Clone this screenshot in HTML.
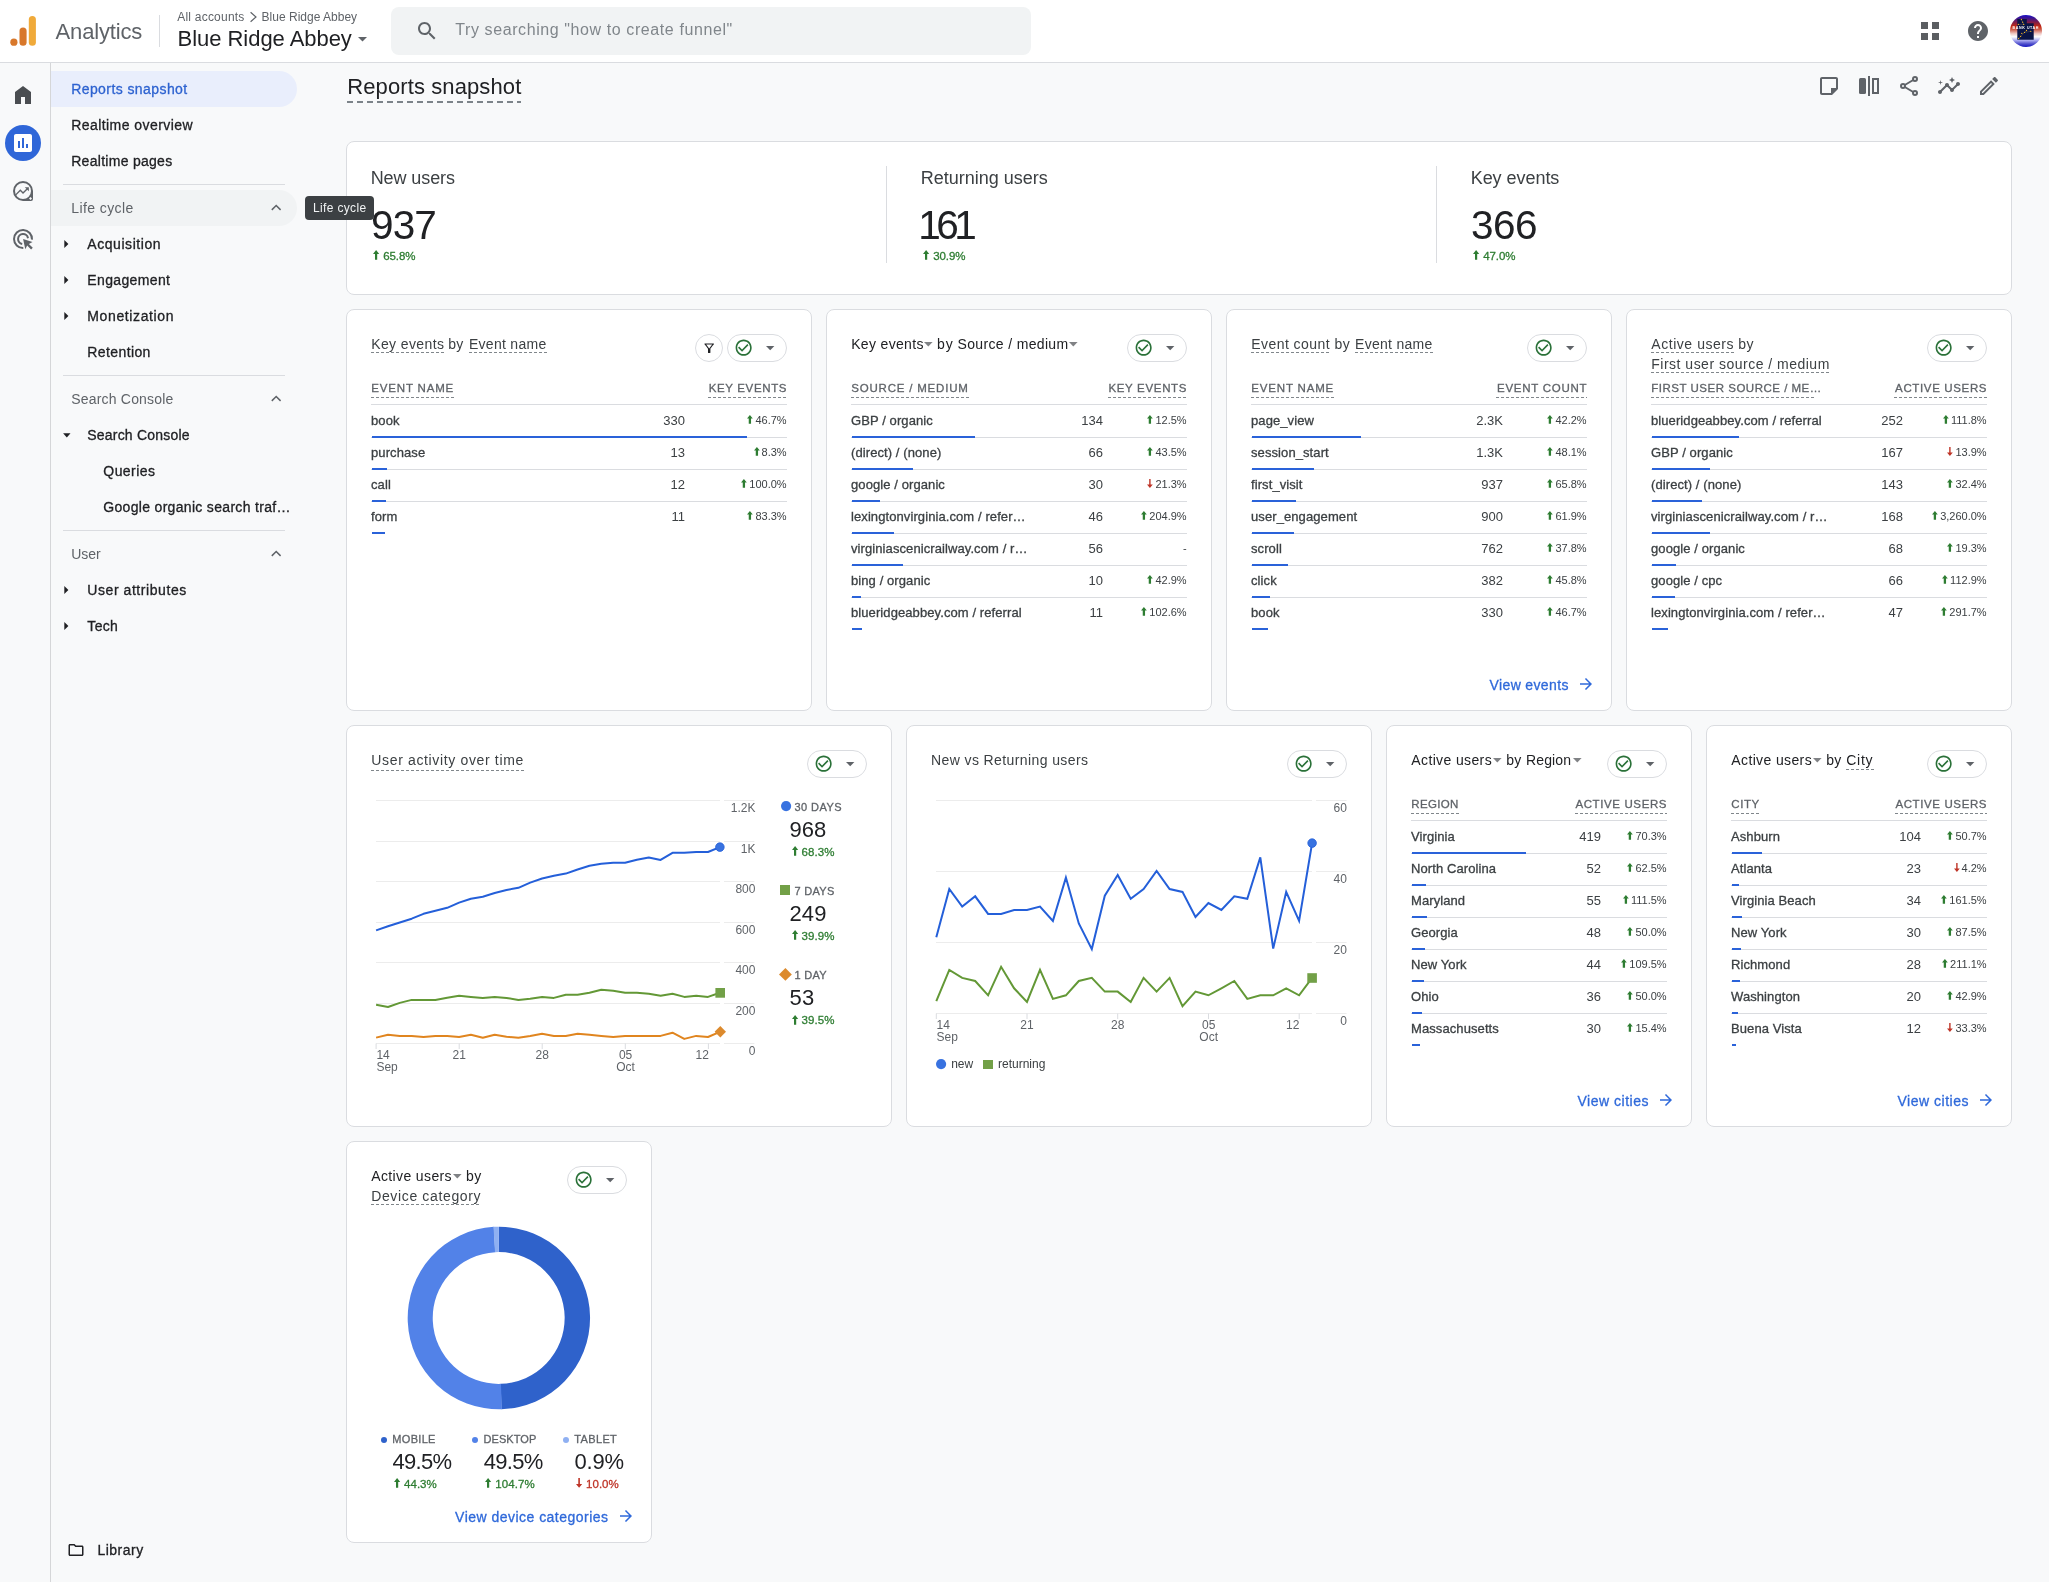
<!DOCTYPE html>
<html lang="en"><head><meta charset="utf-8"><title>Analytics | Reports snapshot</title>
<style>
*{box-sizing:border-box;margin:0;padding:0}
html,body{width:2049px;height:1582px;overflow:hidden;background:#f8f9fa;font-family:"Liberation Sans",sans-serif;position:relative}
.t{position:absolute;white-space:nowrap;line-height:1}
.dsh{position:absolute;height:1px;display:block}
.card{position:absolute;background:#fff;border:1px solid #dadce0;border-radius:8px}
.m{-webkit-text-stroke:0.3px currentColor}
.m2{-webkit-text-stroke:0.3px currentColor}
svg{position:absolute;overflow:visible}
</style></head><body><div id="app" style="position:absolute;left:0;top:0;width:2049px;height:1582px;will-change:transform">
<div style="position:absolute;left:0;top:0;width:2049px;height:63px;background:#fff;border-bottom:1px solid #dadce0"></div>
<svg style="left:0;top:0" width="50" height="62" viewBox="0 0 50 62"><rect x="28.8" y="16.1" width="7.1" height="29.6" rx="3.55" fill="#f0aa3a"/><rect x="19.5" y="27.5" width="7.1" height="18.2" rx="3.55" fill="#d8782b"/><circle cx="13.9" cy="42.15" r="3.6" fill="#d8782b"/></svg>
<span class="t " style="left:55.60px;top:21.00px;font-size:22px;color:#5f6368;letter-spacing:-0.159px;">Analytics</span>
<div style="position:absolute;left:159.0px;top:15.0px;width:1.0px;height:32.0px;background:#dadce0"></div>
<span class="t " style="left:177.20px;top:11.00px;font-size:12px;color:#5f6368;letter-spacing:0.225px;">All accounts</span>
<svg style="left:249px;top:11px" width="9" height="12" viewBox="0 0 9 12" fill="none" stroke="#5f6368" stroke-width="1.2"><path d="M1.6 1.2 L7 6 L1.6 10.8"/></svg>
<span class="t " style="left:261.60px;top:11.00px;font-size:12px;color:#5f6368;letter-spacing:0.006px;">Blue Ridge Abbey</span>
<span class="t " style="left:177.60px;top:28.00px;font-size:22px;color:#202124;letter-spacing:-0.044px;">Blue Ridge Abbey</span>
<svg style="left:357.5px;top:36.8px" width="9" height="5" viewBox="0 0 9 5" fill="#5f6368"><path d="M0 0h9L4.5 4.6z"/></svg>
<div style="position:absolute;left:391.0px;top:7.0px;width:640.0px;height:48.0px;background:#f1f3f4;border-radius:8px"></div>
<svg style="left:415.30px;top:18.70px" width="24" height="24" viewBox="0 0 24 24" fill="#5f6368" ><path d="M15.5 14h-.79l-.28-.27C15.41 12.59 16 11.11 16 9.5 16 5.91 13.09 3 9.5 3S3 5.91 3 9.5 5.91 16 9.5 16c1.61 0 3.09-.59 4.23-1.57l.27.28v.79l5 4.99L20.49 19l-4.99-5zm-6 0C7.01 14 5 11.99 5 9.5S7.01 5 9.5 5 14 7.01 14 9.5 11.99 14 9.5 14z"/></svg>
<span class="t " style="left:455.30px;top:22.00px;font-size:16px;color:#80868b;letter-spacing:0.591px;">Try searching &quot;how to create funnel&quot;</span>
<div style="position:absolute;left:1921.0px;top:22.0px;width:7.0px;height:7.0px;background:#5b5e62"></div>
<div style="position:absolute;left:1932.0px;top:22.0px;width:7.0px;height:7.0px;background:#5b5e62"></div>
<div style="position:absolute;left:1921.0px;top:33.0px;width:7.0px;height:7.0px;background:#5b5e62"></div>
<div style="position:absolute;left:1932.0px;top:33.0px;width:7.0px;height:7.0px;background:#5b5e62"></div>
<svg style="left:1966.00px;top:19.00px" width="24" height="24" viewBox="0 0 24 24" fill="#5f6368" ><path d="M12 2C6.48 2 2 6.48 2 12s4.48 10 10 10 10-4.48 10-10S17.52 2 12 2zm1 17h-2v-2h2v2zm2.07-7.75l-.9.92C13.45 12.9 13 13.5 13 15h-2v-.5c0-1.1.45-2.1 1.17-2.83l1.24-1.26c.37-.36.59-.86.59-1.41 0-1.1-.9-2-2-2s-2 .9-2 2H8c0-2.21 1.79-4 4-4s4 1.79 4 4c0 .88-.36 1.68-.93 2.25z"/></svg>
<div style="position:absolute;left:2010px;top:15px;width:32px;height:32px;border-radius:50%;overflow:hidden;background:linear-gradient(180deg,#1a10c8 0%,#3c1490 10%,#8c1e3c 25%,#c62a14 36%,#cc5a48 45%,#f0c8c4 58%,#ffffff 68%,#b4b4f4 78%,#5050cc 90%,#1414c0 100%)"><svg style="left:0;top:0" width="32" height="32" viewBox="0 0 32 32"><path d="M7.300 4h9.500v4.300h6.900v16.400H7.300z" fill="#0a1446"/><g fill="none" stroke="#9a8a60" stroke-width="0.3"><path d="M11.400 4.500L13.700 9.400H8.400M16.500 15.500L8.600 23.500M14.500 17.400L20.800 16.300"/></g><g fill="#f0b428"><circle cx="11.4" cy="4.5" r="0.650"/><circle cx="12.6" cy="7.2" r="0.650"/><circle cx="13.7" cy="9.4" r="0.650"/><circle cx="8.4" cy="9.4" r="0.650"/><circle cx="16.5" cy="15.5" r="0.650"/><circle cx="14.5" cy="17.4" r="0.650"/><circle cx="20.8" cy="16.3" r="0.650"/><circle cx="11.8" cy="18.4" r="0.650"/><circle cx="10.6" cy="21.4" r="0.650"/><circle cx="8.6" cy="23.5" r="0.650"/></g></svg><span class="t " style="left:2.60px;top:12.00px;font-size:3.6px;color:#fff;letter-spacing:0.585px;font-weight:bold;">BANK UTAH</span></div>
<div style="position:absolute;left:50.0px;top:63.0px;width:1.0px;height:1519.0px;background:#d5d6d8"></div>
<svg style="left:11.00px;top:83.00px" width="24" height="24" viewBox="0 0 24 24" fill="#4a4d51" ><path d="M4 21V9l8-6 8 6v12h-6v-7h-4v7z"/></svg>
<div style="position:absolute;left:5.0px;top:125.0px;width:36.0px;height:36.0px;background:#2f66d8;border-radius:50%"></div>
<svg style="left:11.00px;top:131.00px" width="24" height="24" viewBox="0 0 24 24" fill="#fff" ><path d="M19 3H5c-1.1 0-2 .9-2 2v14c0 1.1.9 2 2 2h14c1.1 0 2-.9 2-2V5c0-1.1-.9-2-2-2zM9 17H7v-7h2v7zm4 0h-2V7h2v10zm4 0h-2v-4h2v4z"/></svg>
<svg style="left:11.00px;top:179.00px" width="24" height="24" viewBox="0 0 24 24" fill="#5f6368" ><path fill-rule="evenodd" d="M12 2a10 10 0 1 0 0 20h8a2 2 0 0 0 2-2v-8A10 10 0 0 0 12 2zm0 2a8 8 0 1 1 0 16a8 8 0 0 1 0-16z"/><path d="M19.5 17.9l1.5 1.5-1.5 1.5-1.5-1.5z" fill="#f8f9fa"/><path transform="translate(2.9 4.1) scale(0.68)" d="M16 6l2.29 2.29-4.88 4.88-4-4L2 16.59 3.41 18l6-6 4 4 6.3-6.29L22 12V6z"/></svg>
<svg style="left:11.00px;top:227.00px" width="24" height="24" viewBox="0 0 24 24" fill="#5f6368" ><g fill="none" stroke="#5f6368" stroke-width="2"><path d="M21 12.6A9 9 0 1 0 12.3 21"/><path d="M17 11.2A5 5 0 1 0 11.2 17"/></g><path d="M12.1 12l9.4 3-3.6 1.9 3.9 3.9-1.7 1.7-3.9-3.9-1.9 3.6z"/></svg>
<div style="position:absolute;left:51.0px;top:71.0px;width:246.0px;height:36.0px;background:#e9eefc;border-radius:0 18px 18px 0"></div>
<div style="position:absolute;left:51.0px;top:190.0px;width:246.0px;height:36.0px;background:#f1f3f4;border-radius:0 18px 18px 0"></div>
<div style="position:absolute;left:63.0px;top:184.0px;width:222.0px;height:1.0px;background:#dadce0"></div>
<div style="position:absolute;left:63.0px;top:375.0px;width:222.0px;height:1.0px;background:#dadce0"></div>
<div style="position:absolute;left:63.0px;top:530.0px;width:222.0px;height:1.0px;background:#dadce0"></div>
<span class="t m" style="left:71.20px;top:82.00px;font-size:14px;color:#2d62d0;letter-spacing:0.417px;">Reports snapshot</span>
<span class="t m" style="left:71.20px;top:118.00px;font-size:14px;color:#202124;letter-spacing:0.437px;">Realtime overview</span>
<span class="t m" style="left:71.20px;top:154.00px;font-size:14px;color:#202124;letter-spacing:0.287px;">Realtime pages</span>
<span class="t " style="left:71.20px;top:201.00px;font-size:14px;color:#5f6368;letter-spacing:0.414px;">Life cycle</span>
<span class="t m" style="left:87.30px;top:237.00px;font-size:14px;color:#202124;letter-spacing:0.554px;">Acquisition</span>
<span class="t m" style="left:87.30px;top:273.00px;font-size:14px;color:#202124;letter-spacing:0.360px;">Engagement</span>
<span class="t m" style="left:87.30px;top:309.00px;font-size:14px;color:#202124;letter-spacing:0.618px;">Monetization</span>
<span class="t m" style="left:87.30px;top:345.00px;font-size:14px;color:#202124;letter-spacing:0.396px;">Retention</span>
<span class="t " style="left:71.20px;top:392.00px;font-size:14px;color:#5f6368;letter-spacing:0.199px;">Search Console</span>
<span class="t m" style="left:87.30px;top:428.00px;font-size:14px;color:#202124;letter-spacing:0.199px;">Search Console</span>
<span class="t m" style="left:103.30px;top:464.00px;font-size:14px;color:#202124;letter-spacing:0.440px;">Queries</span>
<span class="t m" style="left:103.30px;top:500.00px;font-size:14px;color:#202124;letter-spacing:0.315px;">Google organic search traf&hellip;</span>
<span class="t " style="left:71.20px;top:547.00px;font-size:14px;color:#5f6368;letter-spacing:0.010px;">User</span>
<span class="t m" style="left:87.30px;top:583.00px;font-size:14px;color:#202124;letter-spacing:0.564px;">User attributes</span>
<span class="t m" style="left:87.30px;top:619.00px;font-size:14px;color:#202124;letter-spacing:0.332px;">Tech</span>
<span class="t m" style="left:97.40px;top:1543.00px;font-size:14px;color:#202124;letter-spacing:0.515px;">Library</span>
<svg style="left:64px;top:240.0px" width="5" height="8" viewBox="0 0 5 8" fill="#202124"><path d="M0.3 0.1L4.4 4 0.3 7.9z"/></svg>
<svg style="left:64px;top:276.0px" width="5" height="8" viewBox="0 0 5 8" fill="#202124"><path d="M0.3 0.1L4.4 4 0.3 7.9z"/></svg>
<svg style="left:64px;top:312.0px" width="5" height="8" viewBox="0 0 5 8" fill="#202124"><path d="M0.3 0.1L4.4 4 0.3 7.9z"/></svg>
<svg style="left:64px;top:586.0px" width="5" height="8" viewBox="0 0 5 8" fill="#202124"><path d="M0.3 0.1L4.4 4 0.3 7.9z"/></svg>
<svg style="left:64px;top:622.0px" width="5" height="8" viewBox="0 0 5 8" fill="#202124"><path d="M0.3 0.1L4.4 4 0.3 7.9z"/></svg>
<svg style="left:62.5px;top:433px" width="8" height="5" viewBox="0 0 8 5" fill="#202124"><path d="M0.1 0.3h7.4L3.8 4.4z"/></svg>
<svg style="left:270.9px;top:204.4px" width="10.400" height="6.800" viewBox="0 0 10.4 6.8" fill="none" stroke="#5f6368" stroke-width="1.5"><path d="M0.800 5.900L5.200 1.500l4.400 4.400"/></svg>
<svg style="left:270.9px;top:395.4px" width="10.400" height="6.800" viewBox="0 0 10.4 6.8" fill="none" stroke="#5f6368" stroke-width="1.5"><path d="M0.800 5.900L5.200 1.500l4.400 4.400"/></svg>
<svg style="left:270.9px;top:550.4px" width="10.400" height="6.800" viewBox="0 0 10.4 6.8" fill="none" stroke="#5f6368" stroke-width="1.5"><path d="M0.800 5.900L5.200 1.500l4.400 4.400"/></svg>
<svg style="left:67.00px;top:1541.00px" width="18" height="18" viewBox="0 0 24 24" fill="#202124" ><path d="M9.17 6l2 2H20v10H4V6h5.17M10 4H4c-1.1 0-1.99.9-1.99 2L2 18c0 1.1.9 2 2 2h16c1.1 0 2-.9 2-2V8c0-1.1-.9-2-2-2h-8l-2-2z"/></svg>
<span class="t " style="left:347.20px;top:76.00px;font-size:22px;color:#202124;letter-spacing:0.110px;">Reports snapshot</span>
<i class="dsh" style="left:347px;top:101px;width:174px;height:2px;background-image:repeating-linear-gradient(90deg,#7c8389 0 6px,transparent 6px 10px)"></i>
<svg style="left:1817.00px;top:74.00px" width="24" height="24" viewBox="0 0 24 24" fill="#5f6368" ><path d="M19 5v9h-5v5H5V5h14m0-2H5c-1.1 0-2 .9-2 2v14c0 1.1.9 2 2 2h10l6-6V5c0-1.1-.9-2-2-2z"/></svg>
<svg style="left:1857.00px;top:74.00px" width="24" height="24" viewBox="0 0 24 24" fill="#5f6368" ><rect x="2" y="4" width="7" height="16" rx="1.5"/><rect x="11" y="2" width="2" height="20"/><path fill-rule="evenodd" d="M15 4h7v16h-7zM17 6v12h3V6z"/></svg>
<svg style="left:1897.00px;top:74.00px" width="24" height="24" viewBox="0 0 24 24" fill="#5f6368" ><g fill="none" stroke="#5f6368" stroke-width="2"><circle cx="18" cy="5" r="2"/><circle cx="6" cy="12" r="2"/><circle cx="18" cy="19" r="2"/><path d="M7.8 11L16.2 6M7.8 13l8.4 5"/></g></svg>
<svg style="left:1937.00px;top:74.00px" width="24" height="24" viewBox="0 0 24 24" fill="#5f6368" ><path d="M21 8c-1.45 0-2.26 1.44-1.93 2.51l-3.55 3.56c-.3-.09-.74-.09-1.04 0l-2.55-2.55C12.27 10.45 11.46 9 10 9c-1.45 0-2.27 1.44-1.93 2.52l-4.56 4.55C2.44 15.74 1 16.55 1 18c0 1.1.9 2 2 2 1.45 0 2.26-1.44 1.93-2.51l4.55-4.56c.3.09.74.09 1.04 0l2.55 2.55C12.73 16.55 13.54 18 15 18c1.45 0 2.27-1.44 1.93-2.52l3.56-3.55c1.07.33 2.51-.48 2.51-1.93 0-1.1-.9-2-2-2z"/><path d="M15 9l.94-2.07L18 6l-2.06-.93L15 3l-.92 2.07L12 6l2.08.93z"/><path d="M3.500 11L4 9l2-.5L4 8l-.5-2L3 8l-2 .5L3 9z"/></svg>
<svg style="left:1977.00px;top:74.00px" width="24" height="24" viewBox="0 0 24 24" fill="#5f6368" ><path d="M14.060 9.020l.920.920L5.920 19H5v-.920l9.060-9.060M17.660 3c-.250 0-.510.100-.700.290l-1.830 1.830 3.750 3.750 1.830-1.830c.390-.390.390-1.020 0-1.410l-2.340-2.340c-.200-.200-.450-.290-.710-.290zm-3.600 3.190L3 17.250V21h3.750L17.810 9.940l-3.750-3.750z"/></svg>
<div class="card" style="left:346px;top:141px;width:1666px;height:154px"></div>
<div style="position:absolute;left:886.0px;top:166.0px;width:1.0px;height:97.0px;background:#dadce0"></div>
<div style="position:absolute;left:1436.0px;top:166.0px;width:1.0px;height:97.0px;background:#dadce0"></div>
<span class="t " style="left:370.70px;top:169.00px;font-size:18px;color:#3c4043;letter-spacing:-0.092px;">New users</span>
<span class="t " style="left:371.00px;top:205.00px;font-size:40.5px;color:#202124;letter-spacing:-0.892px;">937</span>
<svg style="left:372.90px;top:250.20px" width="6.2" height="9.8" viewBox="0 0 6.2 9.8" fill="#2e7d32"><path d="M3.10 0.00L6.20 4.02L4.20 4.02L4.20 9.80L2.00 9.80L2.00 4.02L0.00 4.02z"/></svg>
<span class="t m2" style="left:383.20px;top:251.00px;font-size:11.5px;color:#2e7d32;letter-spacing:-0.062px;">65.8%</span>
<span class="t " style="left:920.70px;top:169.00px;font-size:18px;color:#3c4043;letter-spacing:0.002px;">Returning users</span>
<span class="t " style="left:918.20px;top:205.00px;font-size:40.5px;color:#202124;letter-spacing:-4.525px;">161</span>
<svg style="left:922.90px;top:250.20px" width="6.2" height="9.8" viewBox="0 0 6.2 9.8" fill="#2e7d32"><path d="M3.10 0.00L6.20 4.02L4.20 4.02L4.20 9.80L2.00 9.80L2.00 4.02L0.00 4.02z"/></svg>
<span class="t m2" style="left:933.20px;top:251.00px;font-size:11.5px;color:#2e7d32;letter-spacing:-0.062px;">30.9%</span>
<span class="t " style="left:1470.70px;top:169.00px;font-size:18px;color:#3c4043;letter-spacing:-0.045px;">Key events</span>
<span class="t " style="left:1470.90px;top:205.00px;font-size:40.5px;color:#202124;letter-spacing:-0.458px;">366</span>
<svg style="left:1472.90px;top:250.20px" width="6.2" height="9.8" viewBox="0 0 6.2 9.8" fill="#2e7d32"><path d="M3.10 0.00L6.20 4.02L4.20 4.02L4.20 9.80L2.00 9.80L2.00 4.02L0.00 4.02z"/></svg>
<span class="t m2" style="left:1483.20px;top:251.00px;font-size:11.5px;color:#2e7d32;letter-spacing:-0.062px;">47.0%</span>
<div style="position:absolute;left:305.0px;top:196.0px;width:69.0px;height:24.0px;background:#3c4043;border-radius:4px"></div>
<span class="t " style="left:313.00px;top:202.00px;font-size:12px;color:#f1f3f4;letter-spacing:0.348px;">Life cycle</span>
<div class="card" style="left:346px;top:309px;width:466px;height:402px"></div>
<span class="t " style="left:371.20px;top:337.00px;font-size:14px;color:#3c4043;letter-spacing:0.394px;">Key events</span>
<i class="dsh" style="left:371.0px;top:352.0px;width:73.5px;background-image:repeating-linear-gradient(90deg,#80868b 0 3px,transparent 3px 5px)"></i>
<span class="t " style="left:448.30px;top:337.00px;font-size:14px;color:#3c4043;letter-spacing:0.107px;">by</span>
<span class="t " style="left:468.90px;top:337.00px;font-size:14px;color:#3c4043;letter-spacing:0.289px;">Event name</span>
<i class="dsh" style="left:468.7px;top:352.0px;width:77.9px;background-image:repeating-linear-gradient(90deg,#80868b 0 3px,transparent 3px 5px)"></i>
<div style="position:absolute;left:727.0px;top:334.0px;width:60.0px;height:28.0px;border:1px solid #dadce0;border-radius:14px;background:#fff"></div>
<svg style="left:734.30px;top:338.15px" width="19.3" height="19.3" viewBox="0 0 24 24" fill="#2a7138" ><path d="M16.59 7.58L10 14.17l-3.590-3.580L5 12l5 5 8-8zM12 2C6.480 2 2 6.480 2 12s4.480 10 10 10 10-4.480 10-10S17.520 2 12 2zm0 18c-4.420 0-8-3.580-8-8s3.580-8 8-8 8 3.580 8 8-3.580 8-8 8z"/></svg>
<svg style="left:765.7px;top:346.1px" width="8.4" height="4.2" viewBox="0 0 8.4 4.2" fill="#5f6368"><path d="M0 0h8.400L4.200 4.200z"/></svg>
<div style="position:absolute;left:695.0px;top:334.0px;width:28.0px;height:28.0px;border:1px solid #dadce0;border-radius:14px;background:#fff"></div>
<svg style="left:701.60px;top:340.50px" width="14.4" height="14.4" viewBox="0 0 24 24" fill="#202124" ><path d="M7 6h10l-5.010 6.300L7 6zm-2.750-.390C6.270 8.200 10 13 10 13v6c0 .550.450 1 1 1h2c.550 0 1-.450 1-1v-6s3.720-4.800 5.740-7.390c.510-.660.040-1.610-.790-1.610H5.040c-.830 0-1.300.950-.790 1.610z"/></svg>
<span class="t m" style="left:371.30px;top:383.00px;font-size:11.5px;color:#5f6368;letter-spacing:0.824px;">EVENT NAME</span>
<i class="dsh" style="left:371.0px;top:397.0px;width:83.3px;background-image:repeating-linear-gradient(90deg,#80868b 0 3px,transparent 3px 5px)"></i>
<span class="t m" style="right:1261.85px;top:383.00px;font-size:11.5px;color:#5f6368;letter-spacing:0.649px;">KEY EVENTS</span>
<i class="dsh" style="left:708.0px;top:397.0px;width:79.0px;background-image:repeating-linear-gradient(90deg,#80868b 0 3px,transparent 3px 5px)"></i>
<div style="position:absolute;left:371.0px;top:404.0px;width:416.0px;height:1.0px;background:#dadce0"></div>
<span class="t m" style="left:371.00px;top:414.00px;font-size:13px;color:#3c4043;letter-spacing:0.09px;">book</span>
<span class="t " style="right:1364.00px;top:414.00px;font-size:13px;color:#3c4043;">330</span>
<span class="t " style="right:1262.40px;top:415.00px;font-size:11px;color:#3c4043;">46.7%</span>
<svg style="left:747.41px;top:415.20px" width="5.8" height="8.8" viewBox="0 0 5.8 8.8" fill="#2e7d32"><path d="M2.90 0.00L5.80 3.61L4.05 3.61L4.05 8.80L1.75 8.80L1.75 3.61L0.00 3.61z"/></svg>
<div style="position:absolute;left:371.0px;top:437.0px;width:416.0px;height:1.0px;background:#dadce0"></div>
<div style="position:absolute;left:372.0px;top:436.0px;width:375.0px;height:2.0px;background:#2a62d9"></div>
<span class="t m" style="left:371.00px;top:446.00px;font-size:13px;color:#3c4043;letter-spacing:0.09px;">purchase</span>
<span class="t " style="right:1364.00px;top:446.00px;font-size:13px;color:#3c4043;">13</span>
<span class="t " style="right:1262.40px;top:447.00px;font-size:11px;color:#3c4043;">8.3%</span>
<svg style="left:753.53px;top:447.20px" width="5.8" height="8.8" viewBox="0 0 5.8 8.8" fill="#2e7d32"><path d="M2.90 0.00L5.80 3.61L4.05 3.61L4.05 8.80L1.75 8.80L1.75 3.61L0.00 3.61z"/></svg>
<div style="position:absolute;left:371.0px;top:469.0px;width:416.0px;height:1.0px;background:#dadce0"></div>
<div style="position:absolute;left:372.0px;top:468.0px;width:14.8px;height:2.0px;background:#2a62d9"></div>
<span class="t m" style="left:371.00px;top:478.00px;font-size:13px;color:#3c4043;letter-spacing:0.09px;">call</span>
<span class="t " style="right:1364.00px;top:478.00px;font-size:13px;color:#3c4043;">12</span>
<span class="t " style="right:1262.40px;top:479.00px;font-size:11px;color:#3c4043;">100.0%</span>
<svg style="left:741.29px;top:479.20px" width="5.8" height="8.8" viewBox="0 0 5.8 8.8" fill="#2e7d32"><path d="M2.90 0.00L5.80 3.61L4.05 3.61L4.05 8.80L1.75 8.80L1.75 3.61L0.00 3.61z"/></svg>
<div style="position:absolute;left:371.0px;top:501.0px;width:416.0px;height:1.0px;background:#dadce0"></div>
<div style="position:absolute;left:372.0px;top:500.0px;width:13.6px;height:2.0px;background:#2a62d9"></div>
<span class="t m" style="left:371.00px;top:510.00px;font-size:13px;color:#3c4043;letter-spacing:0.09px;">form</span>
<span class="t " style="right:1364.00px;top:510.00px;font-size:13px;color:#3c4043;">11</span>
<span class="t " style="right:1262.40px;top:511.00px;font-size:11px;color:#3c4043;">83.3%</span>
<svg style="left:747.41px;top:511.20px" width="5.8" height="8.8" viewBox="0 0 5.8 8.8" fill="#2e7d32"><path d="M2.90 0.00L5.80 3.61L4.05 3.61L4.05 8.80L1.75 8.80L1.75 3.61L0.00 3.61z"/></svg>
<div style="position:absolute;left:372.0px;top:532.0px;width:12.5px;height:2.0px;background:#2a62d9"></div>
<div class="card" style="left:826px;top:309px;width:386px;height:402px"></div>
<span class="t " style="left:851.20px;top:337.00px;font-size:14px;color:#202124;letter-spacing:0.334px;">Key events</span>
<svg style="left:923.9px;top:342.2px" width="9" height="5" viewBox="0 0 9 5" fill="#808285"><path d="M0 0h8.600L4.300 4.400z"/></svg>
<span class="t " style="left:937.10px;top:337.00px;font-size:14px;color:#202124;letter-spacing:0.807px;">by</span>
<span class="t " style="left:957.50px;top:337.00px;font-size:14px;color:#202124;letter-spacing:0.345px;">Source / medium</span>
<svg style="left:1068.8px;top:342.2px" width="9" height="5" viewBox="0 0 9 5" fill="#808285"><path d="M0 0h8.600L4.300 4.400z"/></svg>
<div style="position:absolute;left:1127.0px;top:334.0px;width:60.0px;height:28.0px;border:1px solid #dadce0;border-radius:14px;background:#fff"></div>
<svg style="left:1134.30px;top:338.15px" width="19.3" height="19.3" viewBox="0 0 24 24" fill="#2a7138" ><path d="M16.59 7.58L10 14.17l-3.590-3.580L5 12l5 5 8-8zM12 2C6.480 2 2 6.480 2 12s4.480 10 10 10 10-4.480 10-10S17.520 2 12 2zm0 18c-4.420 0-8-3.580-8-8s3.580-8 8-8 8 3.580 8 8-3.580 8-8 8z"/></svg>
<svg style="left:1165.7px;top:346.1px" width="8.4" height="4.2" viewBox="0 0 8.4 4.2" fill="#5f6368"><path d="M0 0h8.400L4.200 4.200z"/></svg>
<span class="t m" style="left:851.30px;top:383.00px;font-size:11.5px;color:#5f6368;letter-spacing:0.792px;">SOURCE / MEDIUM</span>
<i class="dsh" style="left:851.0px;top:397.0px;width:117.8px;background-image:repeating-linear-gradient(90deg,#80868b 0 3px,transparent 3px 5px)"></i>
<span class="t m" style="right:861.82px;top:383.00px;font-size:11.5px;color:#5f6368;letter-spacing:0.679px;">KEY EVENTS</span>
<i class="dsh" style="left:1107.7px;top:397.0px;width:79.3px;background-image:repeating-linear-gradient(90deg,#80868b 0 3px,transparent 3px 5px)"></i>
<div style="position:absolute;left:851.0px;top:404.0px;width:336.0px;height:1.0px;background:#dadce0"></div>
<span class="t m" style="left:851.00px;top:414.00px;font-size:13px;color:#3c4043;letter-spacing:0.09px;">GBP / organic</span>
<span class="t " style="right:946.00px;top:414.00px;font-size:13px;color:#3c4043;">134</span>
<span class="t " style="right:862.40px;top:415.00px;font-size:11px;color:#3c4043;">12.5%</span>
<svg style="left:1147.41px;top:415.20px" width="5.8" height="8.8" viewBox="0 0 5.8 8.8" fill="#2e7d32"><path d="M2.90 0.00L5.80 3.61L4.05 3.61L4.05 8.80L1.75 8.80L1.75 3.61L0.00 3.61z"/></svg>
<div style="position:absolute;left:851.0px;top:437.0px;width:336.0px;height:1.0px;background:#dadce0"></div>
<div style="position:absolute;left:852.0px;top:436.0px;width:123.0px;height:2.0px;background:#2a62d9"></div>
<span class="t m" style="left:851.00px;top:446.00px;font-size:13px;color:#3c4043;letter-spacing:0.09px;">(direct) / (none)</span>
<span class="t " style="right:946.00px;top:446.00px;font-size:13px;color:#3c4043;">66</span>
<span class="t " style="right:862.40px;top:447.00px;font-size:11px;color:#3c4043;">43.5%</span>
<svg style="left:1147.41px;top:447.20px" width="5.8" height="8.8" viewBox="0 0 5.8 8.8" fill="#2e7d32"><path d="M2.90 0.00L5.80 3.61L4.05 3.61L4.05 8.80L1.75 8.80L1.75 3.61L0.00 3.61z"/></svg>
<div style="position:absolute;left:851.0px;top:469.0px;width:336.0px;height:1.0px;background:#dadce0"></div>
<div style="position:absolute;left:852.0px;top:468.0px;width:60.6px;height:2.0px;background:#2a62d9"></div>
<span class="t m" style="left:851.00px;top:478.00px;font-size:13px;color:#3c4043;letter-spacing:0.09px;">google / organic</span>
<span class="t " style="right:946.00px;top:478.00px;font-size:13px;color:#3c4043;">30</span>
<span class="t " style="right:862.40px;top:479.00px;font-size:11px;color:#3c4043;">21.3%</span>
<svg style="left:1147.41px;top:479.10px" width="5.8" height="9.0" viewBox="0 0 5.8 9.0" fill="#bf3427"><path d="M2.90 9.00L0.00 5.40L2.20 5.40L2.20 0.00L3.60 0.00L3.60 5.40L5.80 5.40z"/></svg>
<div style="position:absolute;left:851.0px;top:501.0px;width:336.0px;height:1.0px;background:#dadce0"></div>
<div style="position:absolute;left:852.0px;top:500.0px;width:27.5px;height:2.0px;background:#2a62d9"></div>
<span class="t m" style="left:851.00px;top:510.00px;font-size:13px;color:#3c4043;letter-spacing:0.09px;">lexingtonvirginia.com / refer&hellip;</span>
<span class="t " style="right:946.00px;top:510.00px;font-size:13px;color:#3c4043;">46</span>
<span class="t " style="right:862.40px;top:511.00px;font-size:11px;color:#3c4043;">204.9%</span>
<svg style="left:1141.29px;top:511.20px" width="5.8" height="8.8" viewBox="0 0 5.8 8.8" fill="#2e7d32"><path d="M2.90 0.00L5.80 3.61L4.05 3.61L4.05 8.80L1.75 8.80L1.75 3.61L0.00 3.61z"/></svg>
<div style="position:absolute;left:851.0px;top:533.0px;width:336.0px;height:1.0px;background:#dadce0"></div>
<div style="position:absolute;left:852.0px;top:532.0px;width:42.2px;height:2.0px;background:#2a62d9"></div>
<span class="t m" style="left:851.00px;top:542.00px;font-size:13px;color:#3c4043;letter-spacing:0.09px;">virginiascenicrailway.com / r&hellip;</span>
<span class="t " style="right:946.00px;top:542.00px;font-size:13px;color:#3c4043;">56</span>
<span class="t " style="right:862.40px;top:543.00px;font-size:11px;color:#3c4043;">-</span>
<div style="position:absolute;left:851.0px;top:565.0px;width:336.0px;height:1.0px;background:#dadce0"></div>
<div style="position:absolute;left:852.0px;top:564.0px;width:51.4px;height:2.0px;background:#2a62d9"></div>
<span class="t m" style="left:851.00px;top:574.00px;font-size:13px;color:#3c4043;letter-spacing:0.09px;">bing / organic</span>
<span class="t " style="right:946.00px;top:574.00px;font-size:13px;color:#3c4043;">10</span>
<span class="t " style="right:862.40px;top:575.00px;font-size:11px;color:#3c4043;">42.9%</span>
<svg style="left:1147.41px;top:575.20px" width="5.8" height="8.8" viewBox="0 0 5.8 8.8" fill="#2e7d32"><path d="M2.90 0.00L5.80 3.61L4.05 3.61L4.05 8.80L1.75 8.80L1.75 3.61L0.00 3.61z"/></svg>
<div style="position:absolute;left:851.0px;top:597.0px;width:336.0px;height:1.0px;background:#dadce0"></div>
<div style="position:absolute;left:852.0px;top:596.0px;width:9.2px;height:2.0px;background:#2a62d9"></div>
<span class="t m" style="left:851.00px;top:606.00px;font-size:13px;color:#3c4043;letter-spacing:0.09px;">blueridgeabbey.com / referral</span>
<span class="t " style="right:946.00px;top:606.00px;font-size:13px;color:#3c4043;">11</span>
<span class="t " style="right:862.40px;top:607.00px;font-size:11px;color:#3c4043;">102.6%</span>
<svg style="left:1141.29px;top:607.20px" width="5.8" height="8.8" viewBox="0 0 5.8 8.8" fill="#2e7d32"><path d="M2.90 0.00L5.80 3.61L4.05 3.61L4.05 8.80L1.75 8.80L1.75 3.61L0.00 3.61z"/></svg>
<div style="position:absolute;left:852.0px;top:628.0px;width:10.1px;height:2.0px;background:#2a62d9"></div>
<div class="card" style="left:1226px;top:309px;width:386px;height:402px"></div>
<span class="t " style="left:1251.20px;top:337.00px;font-size:14px;color:#3c4043;letter-spacing:0.451px;">Event count</span>
<i class="dsh" style="left:1251.0px;top:352.0px;width:79.3px;background-image:repeating-linear-gradient(90deg,#80868b 0 3px,transparent 3px 5px)"></i>
<span class="t " style="left:1334.60px;top:337.00px;font-size:14px;color:#3c4043;letter-spacing:0.457px;">by</span>
<span class="t " style="left:1355.10px;top:337.00px;font-size:14px;color:#3c4043;letter-spacing:0.269px;">Event name</span>
<i class="dsh" style="left:1354.9px;top:352.0px;width:77.7px;background-image:repeating-linear-gradient(90deg,#80868b 0 3px,transparent 3px 5px)"></i>
<div style="position:absolute;left:1527.0px;top:334.0px;width:60.0px;height:28.0px;border:1px solid #dadce0;border-radius:14px;background:#fff"></div>
<svg style="left:1534.30px;top:338.15px" width="19.3" height="19.3" viewBox="0 0 24 24" fill="#2a7138" ><path d="M16.59 7.58L10 14.17l-3.590-3.580L5 12l5 5 8-8zM12 2C6.480 2 2 6.480 2 12s4.480 10 10 10 10-4.480 10-10S17.520 2 12 2zm0 18c-4.420 0-8-3.580-8-8s3.580-8 8-8 8 3.580 8 8-3.580 8-8 8z"/></svg>
<svg style="left:1565.7px;top:346.1px" width="8.4" height="4.2" viewBox="0 0 8.4 4.2" fill="#5f6368"><path d="M0 0h8.400L4.200 4.200z"/></svg>
<span class="t m" style="left:1251.30px;top:383.00px;font-size:11.5px;color:#5f6368;letter-spacing:0.824px;">EVENT NAME</span>
<i class="dsh" style="left:1251.0px;top:397.0px;width:83.3px;background-image:repeating-linear-gradient(90deg,#80868b 0 3px,transparent 3px 5px)"></i>
<span class="t m" style="right:461.77px;top:383.00px;font-size:11.5px;color:#5f6368;letter-spacing:0.726px;">EVENT COUNT</span>
<i class="dsh" style="left:1496.3px;top:397.0px;width:90.7px;background-image:repeating-linear-gradient(90deg,#80868b 0 3px,transparent 3px 5px)"></i>
<div style="position:absolute;left:1251.0px;top:404.0px;width:336.0px;height:1.0px;background:#dadce0"></div>
<span class="t m" style="left:1251.00px;top:414.00px;font-size:13px;color:#3c4043;letter-spacing:0.09px;">page_view</span>
<span class="t " style="right:546.00px;top:414.00px;font-size:13px;color:#3c4043;">2.3K</span>
<span class="t " style="right:462.40px;top:415.00px;font-size:11px;color:#3c4043;">42.2%</span>
<svg style="left:1547.41px;top:415.20px" width="5.8" height="8.8" viewBox="0 0 5.8 8.8" fill="#2e7d32"><path d="M2.90 0.00L5.80 3.61L4.05 3.61L4.05 8.80L1.75 8.80L1.75 3.61L0.00 3.61z"/></svg>
<div style="position:absolute;left:1251.0px;top:437.0px;width:336.0px;height:1.0px;background:#dadce0"></div>
<div style="position:absolute;left:1252.0px;top:436.0px;width:108.9px;height:2.0px;background:#2a62d9"></div>
<span class="t m" style="left:1251.00px;top:446.00px;font-size:13px;color:#3c4043;letter-spacing:0.09px;">session_start</span>
<span class="t " style="right:546.00px;top:446.00px;font-size:13px;color:#3c4043;">1.3K</span>
<span class="t " style="right:462.40px;top:447.00px;font-size:11px;color:#3c4043;">48.1%</span>
<svg style="left:1547.41px;top:447.20px" width="5.8" height="8.8" viewBox="0 0 5.8 8.8" fill="#2e7d32"><path d="M2.90 0.00L5.80 3.61L4.05 3.61L4.05 8.80L1.75 8.80L1.75 3.61L0.00 3.61z"/></svg>
<div style="position:absolute;left:1251.0px;top:469.0px;width:336.0px;height:1.0px;background:#dadce0"></div>
<div style="position:absolute;left:1252.0px;top:468.0px;width:61.7px;height:2.0px;background:#2a62d9"></div>
<span class="t m" style="left:1251.00px;top:478.00px;font-size:13px;color:#3c4043;letter-spacing:0.09px;">first_visit</span>
<span class="t " style="right:546.00px;top:478.00px;font-size:13px;color:#3c4043;">937</span>
<span class="t " style="right:462.40px;top:479.00px;font-size:11px;color:#3c4043;">65.8%</span>
<svg style="left:1547.41px;top:479.20px" width="5.8" height="8.8" viewBox="0 0 5.8 8.8" fill="#2e7d32"><path d="M2.90 0.00L5.80 3.61L4.05 3.61L4.05 8.80L1.75 8.80L1.75 3.61L0.00 3.61z"/></svg>
<div style="position:absolute;left:1251.0px;top:501.0px;width:336.0px;height:1.0px;background:#dadce0"></div>
<div style="position:absolute;left:1252.0px;top:500.0px;width:43.7px;height:2.0px;background:#2a62d9"></div>
<span class="t m" style="left:1251.00px;top:510.00px;font-size:13px;color:#3c4043;letter-spacing:0.09px;">user_engagement</span>
<span class="t " style="right:546.00px;top:510.00px;font-size:13px;color:#3c4043;">900</span>
<span class="t " style="right:462.40px;top:511.00px;font-size:11px;color:#3c4043;">61.9%</span>
<svg style="left:1547.41px;top:511.20px" width="5.8" height="8.8" viewBox="0 0 5.8 8.8" fill="#2e7d32"><path d="M2.90 0.00L5.80 3.61L4.05 3.61L4.05 8.80L1.75 8.80L1.75 3.61L0.00 3.61z"/></svg>
<div style="position:absolute;left:1251.0px;top:533.0px;width:336.0px;height:1.0px;background:#dadce0"></div>
<div style="position:absolute;left:1252.0px;top:532.0px;width:41.9px;height:2.0px;background:#2a62d9"></div>
<span class="t m" style="left:1251.00px;top:542.00px;font-size:13px;color:#3c4043;letter-spacing:0.09px;">scroll</span>
<span class="t " style="right:546.00px;top:542.00px;font-size:13px;color:#3c4043;">762</span>
<span class="t " style="right:462.40px;top:543.00px;font-size:11px;color:#3c4043;">37.8%</span>
<svg style="left:1547.41px;top:543.20px" width="5.8" height="8.8" viewBox="0 0 5.8 8.8" fill="#2e7d32"><path d="M2.90 0.00L5.80 3.61L4.05 3.61L4.05 8.80L1.75 8.80L1.75 3.61L0.00 3.61z"/></svg>
<div style="position:absolute;left:1251.0px;top:565.0px;width:336.0px;height:1.0px;background:#dadce0"></div>
<div style="position:absolute;left:1252.0px;top:564.0px;width:35.6px;height:2.0px;background:#2a62d9"></div>
<span class="t m" style="left:1251.00px;top:574.00px;font-size:13px;color:#3c4043;letter-spacing:0.09px;">click</span>
<span class="t " style="right:546.00px;top:574.00px;font-size:13px;color:#3c4043;">382</span>
<span class="t " style="right:462.40px;top:575.00px;font-size:11px;color:#3c4043;">45.8%</span>
<svg style="left:1547.41px;top:575.20px" width="5.8" height="8.8" viewBox="0 0 5.8 8.8" fill="#2e7d32"><path d="M2.90 0.00L5.80 3.61L4.05 3.61L4.05 8.80L1.75 8.80L1.75 3.61L0.00 3.61z"/></svg>
<div style="position:absolute;left:1251.0px;top:597.0px;width:336.0px;height:1.0px;background:#dadce0"></div>
<div style="position:absolute;left:1252.0px;top:596.0px;width:17.9px;height:2.0px;background:#2a62d9"></div>
<span class="t m" style="left:1251.00px;top:606.00px;font-size:13px;color:#3c4043;letter-spacing:0.09px;">book</span>
<span class="t " style="right:546.00px;top:606.00px;font-size:13px;color:#3c4043;">330</span>
<span class="t " style="right:462.40px;top:607.00px;font-size:11px;color:#3c4043;">46.7%</span>
<svg style="left:1547.41px;top:607.20px" width="5.8" height="8.8" viewBox="0 0 5.8 8.8" fill="#2e7d32"><path d="M2.90 0.00L5.80 3.61L4.05 3.61L4.05 8.80L1.75 8.80L1.75 3.61L0.00 3.61z"/></svg>
<div style="position:absolute;left:1252.0px;top:628.0px;width:15.6px;height:2.0px;background:#2a62d9"></div>
<svg style="left:1577.10px;top:675.10px" width="18" height="18" viewBox="0 0 24 24" fill="#2f69da" ><path d="M12 4l-1.410 1.410L16.170 11H4v2h12.170l-5.580 5.590L12 20l8-8z"/></svg>
<span class="t m" style="right:480.24px;top:678.00px;font-size:14px;color:#2f69da;letter-spacing:0.361px;">View events</span>
<div class="card" style="left:1626px;top:309px;width:386px;height:402px"></div>
<span class="t " style="left:1651.30px;top:337.00px;font-size:14px;color:#3c4043;letter-spacing:0.546px;">Active users</span>
<i class="dsh" style="left:1651.0px;top:352.0px;width:83.3px;background-image:repeating-linear-gradient(90deg,#80868b 0 3px,transparent 3px 5px)"></i>
<span class="t " style="left:1738.20px;top:337.00px;font-size:14px;color:#3c4043;letter-spacing:0.557px;">by</span>
<span class="t " style="left:1651.30px;top:357.00px;font-size:14px;color:#3c4043;letter-spacing:0.492px;">First user source / medium</span>
<i class="dsh" style="left:1651.0px;top:372.0px;width:179.0px;background-image:repeating-linear-gradient(90deg,#80868b 0 3px,transparent 3px 5px)"></i>
<div style="position:absolute;left:1927.0px;top:334.0px;width:60.0px;height:28.0px;border:1px solid #dadce0;border-radius:14px;background:#fff"></div>
<svg style="left:1934.30px;top:338.15px" width="19.3" height="19.3" viewBox="0 0 24 24" fill="#2a7138" ><path d="M16.59 7.58L10 14.17l-3.590-3.580L5 12l5 5 8-8zM12 2C6.480 2 2 6.480 2 12s4.480 10 10 10 10-4.480 10-10S17.520 2 12 2zm0 18c-4.420 0-8-3.580-8-8s3.580-8 8-8 8 3.580 8 8-3.580 8-8 8z"/></svg>
<svg style="left:1965.7px;top:346.1px" width="8.4" height="4.2" viewBox="0 0 8.4 4.2" fill="#5f6368"><path d="M0 0h8.400L4.200 4.200z"/></svg>
<span class="t m" style="left:1651.30px;top:383.00px;font-size:11.5px;color:#5f6368;letter-spacing:0.505px;">FIRST USER SOURCE / ME&hellip;</span>
<i class="dsh" style="left:1651.0px;top:397.0px;width:162.5px;background-image:repeating-linear-gradient(90deg,#80868b 0 3px,transparent 3px 5px)"></i>
<span class="t m" style="right:61.85px;top:383.00px;font-size:11.5px;color:#5f6368;letter-spacing:0.645px;">ACTIVE USERS</span>
<i class="dsh" style="left:1894.4px;top:397.0px;width:92.6px;background-image:repeating-linear-gradient(90deg,#80868b 0 3px,transparent 3px 5px)"></i>
<div style="position:absolute;left:1651.0px;top:404.0px;width:336.0px;height:1.0px;background:#dadce0"></div>
<span class="t m" style="left:1651.00px;top:414.00px;font-size:13px;color:#3c4043;letter-spacing:0.09px;">blueridgeabbey.com / referral</span>
<span class="t " style="right:146.00px;top:414.00px;font-size:13px;color:#3c4043;">252</span>
<span class="t " style="right:62.40px;top:415.00px;font-size:11px;color:#3c4043;">111.8%</span>
<svg style="left:1942.92px;top:415.20px" width="5.8" height="8.8" viewBox="0 0 5.8 8.8" fill="#2e7d32"><path d="M2.90 0.00L5.80 3.61L4.05 3.61L4.05 8.80L1.75 8.80L1.75 3.61L0.00 3.61z"/></svg>
<div style="position:absolute;left:1651.0px;top:437.0px;width:336.0px;height:1.0px;background:#dadce0"></div>
<div style="position:absolute;left:1652.0px;top:436.0px;width:87.1px;height:2.0px;background:#2a62d9"></div>
<span class="t m" style="left:1651.00px;top:446.00px;font-size:13px;color:#3c4043;letter-spacing:0.09px;">GBP / organic</span>
<span class="t " style="right:146.00px;top:446.00px;font-size:13px;color:#3c4043;">167</span>
<span class="t " style="right:62.40px;top:447.00px;font-size:11px;color:#3c4043;">13.9%</span>
<svg style="left:1947.41px;top:447.10px" width="5.8" height="9.0" viewBox="0 0 5.8 9.0" fill="#bf3427"><path d="M2.90 9.00L0.00 5.40L2.20 5.40L2.20 0.00L3.60 0.00L3.60 5.40L5.80 5.40z"/></svg>
<div style="position:absolute;left:1651.0px;top:469.0px;width:336.0px;height:1.0px;background:#dadce0"></div>
<div style="position:absolute;left:1652.0px;top:468.0px;width:57.9px;height:2.0px;background:#2a62d9"></div>
<span class="t m" style="left:1651.00px;top:478.00px;font-size:13px;color:#3c4043;letter-spacing:0.09px;">(direct) / (none)</span>
<span class="t " style="right:146.00px;top:478.00px;font-size:13px;color:#3c4043;">143</span>
<span class="t " style="right:62.40px;top:479.00px;font-size:11px;color:#3c4043;">32.4%</span>
<svg style="left:1947.41px;top:479.20px" width="5.8" height="8.8" viewBox="0 0 5.8 8.8" fill="#2e7d32"><path d="M2.90 0.00L5.80 3.61L4.05 3.61L4.05 8.80L1.75 8.80L1.75 3.61L0.00 3.61z"/></svg>
<div style="position:absolute;left:1651.0px;top:501.0px;width:336.0px;height:1.0px;background:#dadce0"></div>
<div style="position:absolute;left:1652.0px;top:500.0px;width:49.9px;height:2.0px;background:#2a62d9"></div>
<span class="t m" style="left:1651.00px;top:510.00px;font-size:13px;color:#3c4043;letter-spacing:0.09px;">virginiascenicrailway.com / r&hellip;</span>
<span class="t " style="right:146.00px;top:510.00px;font-size:13px;color:#3c4043;">168</span>
<span class="t " style="right:62.40px;top:511.00px;font-size:11px;color:#3c4043;">3,260.0%</span>
<svg style="left:1932.12px;top:511.20px" width="5.8" height="8.8" viewBox="0 0 5.8 8.8" fill="#2e7d32"><path d="M2.90 0.00L5.80 3.61L4.05 3.61L4.05 8.80L1.75 8.80L1.75 3.61L0.00 3.61z"/></svg>
<div style="position:absolute;left:1651.0px;top:533.0px;width:336.0px;height:1.0px;background:#dadce0"></div>
<div style="position:absolute;left:1652.0px;top:532.0px;width:57.9px;height:2.0px;background:#2a62d9"></div>
<span class="t m" style="left:1651.00px;top:542.00px;font-size:13px;color:#3c4043;letter-spacing:0.09px;">google / organic</span>
<span class="t " style="right:146.00px;top:542.00px;font-size:13px;color:#3c4043;">68</span>
<span class="t " style="right:62.40px;top:543.00px;font-size:11px;color:#3c4043;">19.3%</span>
<svg style="left:1947.41px;top:543.20px" width="5.8" height="8.8" viewBox="0 0 5.8 8.8" fill="#2e7d32"><path d="M2.90 0.00L5.80 3.61L4.05 3.61L4.05 8.80L1.75 8.80L1.75 3.61L0.00 3.61z"/></svg>
<div style="position:absolute;left:1651.0px;top:565.0px;width:336.0px;height:1.0px;background:#dadce0"></div>
<div style="position:absolute;left:1652.0px;top:564.0px;width:23.9px;height:2.0px;background:#2a62d9"></div>
<span class="t m" style="left:1651.00px;top:574.00px;font-size:13px;color:#3c4043;letter-spacing:0.09px;">google / cpc</span>
<span class="t " style="right:146.00px;top:574.00px;font-size:13px;color:#3c4043;">66</span>
<span class="t " style="right:62.40px;top:575.00px;font-size:11px;color:#3c4043;">112.9%</span>
<svg style="left:1942.11px;top:575.20px" width="5.8" height="8.8" viewBox="0 0 5.8 8.8" fill="#2e7d32"><path d="M2.90 0.00L5.80 3.61L4.05 3.61L4.05 8.80L1.75 8.80L1.75 3.61L0.00 3.61z"/></svg>
<div style="position:absolute;left:1651.0px;top:597.0px;width:336.0px;height:1.0px;background:#dadce0"></div>
<div style="position:absolute;left:1652.0px;top:596.0px;width:22.8px;height:2.0px;background:#2a62d9"></div>
<span class="t m" style="left:1651.00px;top:606.00px;font-size:13px;color:#3c4043;letter-spacing:0.09px;">lexingtonvirginia.com / refer&hellip;</span>
<span class="t " style="right:146.00px;top:606.00px;font-size:13px;color:#3c4043;">47</span>
<span class="t " style="right:62.40px;top:607.00px;font-size:11px;color:#3c4043;">291.7%</span>
<svg style="left:1941.29px;top:607.20px" width="5.8" height="8.8" viewBox="0 0 5.8 8.8" fill="#2e7d32"><path d="M2.90 0.00L5.80 3.61L4.05 3.61L4.05 8.80L1.75 8.80L1.75 3.61L0.00 3.61z"/></svg>
<div style="position:absolute;left:1652.0px;top:628.0px;width:15.9px;height:2.0px;background:#2a62d9"></div>
<div class="card" style="left:1386px;top:725px;width:306px;height:402px"></div>
<span class="t " style="left:1411.30px;top:753.00px;font-size:14px;color:#202124;letter-spacing:0.371px;">Active users</span>
<svg style="left:1492.7px;top:758.2px" width="9" height="5" viewBox="0 0 9 5" fill="#808285"><path d="M0 0h8.600L4.300 4.400z"/></svg>
<span class="t " style="left:1506.30px;top:753.00px;font-size:14px;color:#202124;letter-spacing:0.157px;">by</span>
<span class="t " style="left:1526.00px;top:753.00px;font-size:14px;color:#202124;letter-spacing:0.139px;">Region</span>
<svg style="left:1572.8px;top:758.2px" width="9" height="5" viewBox="0 0 9 5" fill="#808285"><path d="M0 0h8.600L4.300 4.400z"/></svg>
<div style="position:absolute;left:1607.0px;top:750.0px;width:60.0px;height:28.0px;border:1px solid #dadce0;border-radius:14px;background:#fff"></div>
<svg style="left:1614.30px;top:754.15px" width="19.3" height="19.3" viewBox="0 0 24 24" fill="#2a7138" ><path d="M16.59 7.58L10 14.17l-3.590-3.580L5 12l5 5 8-8zM12 2C6.480 2 2 6.480 2 12s4.480 10 10 10 10-4.480 10-10S17.520 2 12 2zm0 18c-4.420 0-8-3.580-8-8s3.580-8 8-8 8 3.580 8 8-3.580 8-8 8z"/></svg>
<svg style="left:1645.7px;top:762.1px" width="8.4" height="4.2" viewBox="0 0 8.4 4.2" fill="#5f6368"><path d="M0 0h8.400L4.200 4.200z"/></svg>
<span class="t m" style="left:1411.30px;top:799.00px;font-size:11.5px;color:#5f6368;letter-spacing:0.339px;">REGION</span>
<i class="dsh" style="left:1411.0px;top:813.0px;width:47.9px;background-image:repeating-linear-gradient(90deg,#80868b 0 3px,transparent 3px 5px)"></i>
<span class="t m" style="right:381.89px;top:799.00px;font-size:11.5px;color:#5f6368;letter-spacing:0.612px;">ACTIVE USERS</span>
<i class="dsh" style="left:1574.8px;top:813.0px;width:92.2px;background-image:repeating-linear-gradient(90deg,#80868b 0 3px,transparent 3px 5px)"></i>
<div style="position:absolute;left:1411.0px;top:820.0px;width:256.0px;height:1.0px;background:#dadce0"></div>
<span class="t m" style="left:1411.00px;top:830.00px;font-size:13px;color:#3c4043;letter-spacing:0.09px;">Virginia</span>
<span class="t " style="right:448.00px;top:830.00px;font-size:13px;color:#3c4043;">419</span>
<span class="t " style="right:382.40px;top:831.00px;font-size:11px;color:#3c4043;">70.3%</span>
<svg style="left:1627.41px;top:831.20px" width="5.8" height="8.8" viewBox="0 0 5.8 8.8" fill="#2e7d32"><path d="M2.90 0.00L5.80 3.61L4.05 3.61L4.05 8.80L1.75 8.80L1.75 3.61L0.00 3.61z"/></svg>
<div style="position:absolute;left:1411.0px;top:853.0px;width:256.0px;height:1.0px;background:#dadce0"></div>
<div style="position:absolute;left:1412.0px;top:852.0px;width:113.6px;height:2.0px;background:#2a62d9"></div>
<span class="t m" style="left:1411.00px;top:862.00px;font-size:13px;color:#3c4043;letter-spacing:0.09px;">North Carolina</span>
<span class="t " style="right:448.00px;top:862.00px;font-size:13px;color:#3c4043;">52</span>
<span class="t " style="right:382.40px;top:863.00px;font-size:11px;color:#3c4043;">62.5%</span>
<svg style="left:1627.41px;top:863.20px" width="5.8" height="8.8" viewBox="0 0 5.8 8.8" fill="#2e7d32"><path d="M2.90 0.00L5.80 3.61L4.05 3.61L4.05 8.80L1.75 8.80L1.75 3.61L0.00 3.61z"/></svg>
<div style="position:absolute;left:1411.0px;top:885.0px;width:256.0px;height:1.0px;background:#dadce0"></div>
<div style="position:absolute;left:1412.0px;top:884.0px;width:14.1px;height:2.0px;background:#2a62d9"></div>
<span class="t m" style="left:1411.00px;top:894.00px;font-size:13px;color:#3c4043;letter-spacing:0.09px;">Maryland</span>
<span class="t " style="right:448.00px;top:894.00px;font-size:13px;color:#3c4043;">55</span>
<span class="t " style="right:382.40px;top:895.00px;font-size:11px;color:#3c4043;">111.5%</span>
<svg style="left:1622.92px;top:895.20px" width="5.8" height="8.8" viewBox="0 0 5.8 8.8" fill="#2e7d32"><path d="M2.90 0.00L5.80 3.61L4.05 3.61L4.05 8.80L1.75 8.80L1.75 3.61L0.00 3.61z"/></svg>
<div style="position:absolute;left:1411.0px;top:917.0px;width:256.0px;height:1.0px;background:#dadce0"></div>
<div style="position:absolute;left:1412.0px;top:916.0px;width:14.9px;height:2.0px;background:#2a62d9"></div>
<span class="t m" style="left:1411.00px;top:926.00px;font-size:13px;color:#3c4043;letter-spacing:0.09px;">Georgia</span>
<span class="t " style="right:448.00px;top:926.00px;font-size:13px;color:#3c4043;">48</span>
<span class="t " style="right:382.40px;top:927.00px;font-size:11px;color:#3c4043;">50.0%</span>
<svg style="left:1627.41px;top:927.20px" width="5.8" height="8.8" viewBox="0 0 5.8 8.8" fill="#2e7d32"><path d="M2.90 0.00L5.80 3.61L4.05 3.61L4.05 8.80L1.75 8.80L1.75 3.61L0.00 3.61z"/></svg>
<div style="position:absolute;left:1411.0px;top:949.0px;width:256.0px;height:1.0px;background:#dadce0"></div>
<div style="position:absolute;left:1412.0px;top:948.0px;width:13.0px;height:2.0px;background:#2a62d9"></div>
<span class="t m" style="left:1411.00px;top:958.00px;font-size:13px;color:#3c4043;letter-spacing:0.09px;">New York</span>
<span class="t " style="right:448.00px;top:958.00px;font-size:13px;color:#3c4043;">44</span>
<span class="t " style="right:382.40px;top:959.00px;font-size:11px;color:#3c4043;">109.5%</span>
<svg style="left:1621.29px;top:959.20px" width="5.8" height="8.8" viewBox="0 0 5.8 8.8" fill="#2e7d32"><path d="M2.90 0.00L5.80 3.61L4.05 3.61L4.05 8.80L1.75 8.80L1.75 3.61L0.00 3.61z"/></svg>
<div style="position:absolute;left:1411.0px;top:981.0px;width:256.0px;height:1.0px;background:#dadce0"></div>
<div style="position:absolute;left:1412.0px;top:980.0px;width:11.9px;height:2.0px;background:#2a62d9"></div>
<span class="t m" style="left:1411.00px;top:990.00px;font-size:13px;color:#3c4043;letter-spacing:0.09px;">Ohio</span>
<span class="t " style="right:448.00px;top:990.00px;font-size:13px;color:#3c4043;">36</span>
<span class="t " style="right:382.40px;top:991.00px;font-size:11px;color:#3c4043;">50.0%</span>
<svg style="left:1627.41px;top:991.20px" width="5.8" height="8.8" viewBox="0 0 5.8 8.8" fill="#2e7d32"><path d="M2.90 0.00L5.80 3.61L4.05 3.61L4.05 8.80L1.75 8.80L1.75 3.61L0.00 3.61z"/></svg>
<div style="position:absolute;left:1411.0px;top:1013.0px;width:256.0px;height:1.0px;background:#dadce0"></div>
<div style="position:absolute;left:1412.0px;top:1012.0px;width:9.8px;height:2.0px;background:#2a62d9"></div>
<span class="t m" style="left:1411.00px;top:1022.00px;font-size:13px;color:#3c4043;letter-spacing:0.09px;">Massachusetts</span>
<span class="t " style="right:448.00px;top:1022.00px;font-size:13px;color:#3c4043;">30</span>
<span class="t " style="right:382.40px;top:1023.00px;font-size:11px;color:#3c4043;">15.4%</span>
<svg style="left:1627.41px;top:1023.20px" width="5.8" height="8.8" viewBox="0 0 5.8 8.8" fill="#2e7d32"><path d="M2.90 0.00L5.80 3.61L4.05 3.61L4.05 8.80L1.75 8.80L1.75 3.61L0.00 3.61z"/></svg>
<div style="position:absolute;left:1412.0px;top:1044.0px;width:8.1px;height:2.0px;background:#2a62d9"></div>
<svg style="left:1657.20px;top:1091.10px" width="18" height="18" viewBox="0 0 24 24" fill="#2f69da" ><path d="M12 4l-1.410 1.410L16.170 11H4v2h12.170l-5.580 5.590L12 20l8-8z"/></svg>
<span class="t m" style="right:399.99px;top:1094.00px;font-size:14px;color:#2f69da;letter-spacing:0.511px;">View cities</span>
<div class="card" style="left:1706px;top:725px;width:306px;height:402px"></div>
<span class="t " style="left:1731.30px;top:753.00px;font-size:14px;color:#202124;letter-spacing:0.371px;">Active users</span>
<svg style="left:1812.7px;top:758.2px" width="9" height="5" viewBox="0 0 9 5" fill="#808285"><path d="M0 0h8.600L4.300 4.400z"/></svg>
<span class="t " style="left:1826.30px;top:753.00px;font-size:14px;color:#202124;letter-spacing:0.157px;">by</span>
<span class="t " style="left:1846.20px;top:753.00px;font-size:14px;color:#202124;letter-spacing:0.772px;">City</span>
<i class="dsh" style="left:1846.0px;top:769.0px;width:27.6px;background-image:repeating-linear-gradient(90deg,#80868b 0 3px,transparent 3px 5px)"></i>
<div style="position:absolute;left:1927.0px;top:750.0px;width:60.0px;height:28.0px;border:1px solid #dadce0;border-radius:14px;background:#fff"></div>
<svg style="left:1934.30px;top:754.15px" width="19.3" height="19.3" viewBox="0 0 24 24" fill="#2a7138" ><path d="M16.59 7.58L10 14.17l-3.590-3.580L5 12l5 5 8-8zM12 2C6.480 2 2 6.480 2 12s4.480 10 10 10 10-4.480 10-10S17.520 2 12 2zm0 18c-4.420 0-8-3.580-8-8s3.580-8 8-8 8 3.580 8 8-3.580 8-8 8z"/></svg>
<svg style="left:1965.7px;top:762.1px" width="8.4" height="4.2" viewBox="0 0 8.4 4.2" fill="#5f6368"><path d="M0 0h8.400L4.200 4.200z"/></svg>
<span class="t m" style="left:1731.30px;top:799.00px;font-size:11.5px;color:#5f6368;letter-spacing:0.551px;">CITY</span>
<i class="dsh" style="left:1731.0px;top:813.0px;width:28.9px;background-image:repeating-linear-gradient(90deg,#80868b 0 3px,transparent 3px 5px)"></i>
<span class="t m" style="right:61.89px;top:799.00px;font-size:11.5px;color:#5f6368;letter-spacing:0.612px;">ACTIVE USERS</span>
<i class="dsh" style="left:1894.8px;top:813.0px;width:92.2px;background-image:repeating-linear-gradient(90deg,#80868b 0 3px,transparent 3px 5px)"></i>
<div style="position:absolute;left:1731.0px;top:820.0px;width:256.0px;height:1.0px;background:#dadce0"></div>
<span class="t m" style="left:1731.00px;top:830.00px;font-size:13px;color:#3c4043;letter-spacing:0.09px;">Ashburn</span>
<span class="t " style="right:128.00px;top:830.00px;font-size:13px;color:#3c4043;">104</span>
<span class="t " style="right:62.40px;top:831.00px;font-size:11px;color:#3c4043;">50.7%</span>
<svg style="left:1947.41px;top:831.20px" width="5.8" height="8.8" viewBox="0 0 5.8 8.8" fill="#2e7d32"><path d="M2.90 0.00L5.80 3.61L4.05 3.61L4.05 8.80L1.75 8.80L1.75 3.61L0.00 3.61z"/></svg>
<div style="position:absolute;left:1731.0px;top:853.0px;width:256.0px;height:1.0px;background:#dadce0"></div>
<div style="position:absolute;left:1732.0px;top:852.0px;width:29.7px;height:2.0px;background:#2a62d9"></div>
<span class="t m" style="left:1731.00px;top:862.00px;font-size:13px;color:#3c4043;letter-spacing:0.09px;">Atlanta</span>
<span class="t " style="right:128.00px;top:862.00px;font-size:13px;color:#3c4043;">23</span>
<span class="t " style="right:62.40px;top:863.00px;font-size:11px;color:#3c4043;">4.2%</span>
<svg style="left:1953.53px;top:863.10px" width="5.8" height="9.0" viewBox="0 0 5.8 9.0" fill="#bf3427"><path d="M2.90 9.00L0.00 5.40L2.20 5.40L2.20 0.00L3.60 0.00L3.60 5.40L5.80 5.40z"/></svg>
<div style="position:absolute;left:1731.0px;top:885.0px;width:256.0px;height:1.0px;background:#dadce0"></div>
<div style="position:absolute;left:1732.0px;top:884.0px;width:6.9px;height:2.0px;background:#2a62d9"></div>
<span class="t m" style="left:1731.00px;top:894.00px;font-size:13px;color:#3c4043;letter-spacing:0.09px;">Virginia Beach</span>
<span class="t " style="right:128.00px;top:894.00px;font-size:13px;color:#3c4043;">34</span>
<span class="t " style="right:62.40px;top:895.00px;font-size:11px;color:#3c4043;">161.5%</span>
<svg style="left:1941.29px;top:895.20px" width="5.8" height="8.8" viewBox="0 0 5.8 8.8" fill="#2e7d32"><path d="M2.90 0.00L5.80 3.61L4.05 3.61L4.05 8.80L1.75 8.80L1.75 3.61L0.00 3.61z"/></svg>
<div style="position:absolute;left:1731.0px;top:917.0px;width:256.0px;height:1.0px;background:#dadce0"></div>
<div style="position:absolute;left:1732.0px;top:916.0px;width:9.8px;height:2.0px;background:#2a62d9"></div>
<span class="t m" style="left:1731.00px;top:926.00px;font-size:13px;color:#3c4043;letter-spacing:0.09px;">New York</span>
<span class="t " style="right:128.00px;top:926.00px;font-size:13px;color:#3c4043;">30</span>
<span class="t " style="right:62.40px;top:927.00px;font-size:11px;color:#3c4043;">87.5%</span>
<svg style="left:1947.41px;top:927.20px" width="5.8" height="8.8" viewBox="0 0 5.8 8.8" fill="#2e7d32"><path d="M2.90 0.00L5.80 3.61L4.05 3.61L4.05 8.80L1.75 8.80L1.75 3.61L0.00 3.61z"/></svg>
<div style="position:absolute;left:1731.0px;top:949.0px;width:256.0px;height:1.0px;background:#dadce0"></div>
<div style="position:absolute;left:1732.0px;top:948.0px;width:8.8px;height:2.0px;background:#2a62d9"></div>
<span class="t m" style="left:1731.00px;top:958.00px;font-size:13px;color:#3c4043;letter-spacing:0.09px;">Richmond</span>
<span class="t " style="right:128.00px;top:958.00px;font-size:13px;color:#3c4043;">28</span>
<span class="t " style="right:62.40px;top:959.00px;font-size:11px;color:#3c4043;">211.1%</span>
<svg style="left:1942.11px;top:959.20px" width="5.8" height="8.8" viewBox="0 0 5.8 8.8" fill="#2e7d32"><path d="M2.90 0.00L5.80 3.61L4.05 3.61L4.05 8.80L1.75 8.80L1.75 3.61L0.00 3.61z"/></svg>
<div style="position:absolute;left:1731.0px;top:981.0px;width:256.0px;height:1.0px;background:#dadce0"></div>
<div style="position:absolute;left:1732.0px;top:980.0px;width:7.8px;height:2.0px;background:#2a62d9"></div>
<span class="t m" style="left:1731.00px;top:990.00px;font-size:13px;color:#3c4043;letter-spacing:0.09px;">Washington</span>
<span class="t " style="right:128.00px;top:990.00px;font-size:13px;color:#3c4043;">20</span>
<span class="t " style="right:62.40px;top:991.00px;font-size:11px;color:#3c4043;">42.9%</span>
<svg style="left:1947.41px;top:991.20px" width="5.8" height="8.8" viewBox="0 0 5.8 8.8" fill="#2e7d32"><path d="M2.90 0.00L5.80 3.61L4.05 3.61L4.05 8.80L1.75 8.80L1.75 3.61L0.00 3.61z"/></svg>
<div style="position:absolute;left:1731.0px;top:1013.0px;width:256.0px;height:1.0px;background:#dadce0"></div>
<div style="position:absolute;left:1732.0px;top:1012.0px;width:5.9px;height:2.0px;background:#2a62d9"></div>
<span class="t m" style="left:1731.00px;top:1022.00px;font-size:13px;color:#3c4043;letter-spacing:0.09px;">Buena Vista</span>
<span class="t " style="right:128.00px;top:1022.00px;font-size:13px;color:#3c4043;">12</span>
<span class="t " style="right:62.40px;top:1023.00px;font-size:11px;color:#3c4043;">33.3%</span>
<svg style="left:1947.41px;top:1023.10px" width="5.8" height="9.0" viewBox="0 0 5.8 9.0" fill="#bf3427"><path d="M2.90 9.00L0.00 5.40L2.20 5.40L2.20 0.00L3.60 0.00L3.60 5.40L5.80 5.40z"/></svg>
<div style="position:absolute;left:1732.0px;top:1044.0px;width:3.6px;height:2.0px;background:#2a62d9"></div>
<svg style="left:1977.20px;top:1091.10px" width="18" height="18" viewBox="0 0 24 24" fill="#2f69da" ><path d="M12 4l-1.410 1.410L16.170 11H4v2h12.170l-5.580 5.590L12 20l8-8z"/></svg>
<span class="t m" style="right:79.99px;top:1094.00px;font-size:14px;color:#2f69da;letter-spacing:0.511px;">View cities</span>
<div class="card" style="left:346px;top:725px;width:546px;height:402px"></div>
<span class="t " style="left:371.30px;top:753.00px;font-size:14px;color:#3c4043;letter-spacing:0.648px;">User activity over time</span>
<i class="dsh" style="left:371.0px;top:770.0px;width:153.0px;background-image:repeating-linear-gradient(90deg,#80868b 0 3px,transparent 3px 5px)"></i>
<div style="position:absolute;left:807.0px;top:750.0px;width:60.0px;height:28.0px;border:1px solid #dadce0;border-radius:14px;background:#fff"></div>
<svg style="left:814.30px;top:754.15px" width="19.3" height="19.3" viewBox="0 0 24 24" fill="#2a7138" ><path d="M16.59 7.58L10 14.17l-3.590-3.580L5 12l5 5 8-8zM12 2C6.480 2 2 6.480 2 12s4.480 10 10 10 10-4.480 10-10S17.520 2 12 2zm0 18c-4.420 0-8-3.580-8-8s3.580-8 8-8 8 3.580 8 8-3.580 8-8 8z"/></svg>
<svg style="left:845.7px;top:762.1px" width="8.4" height="4.2" viewBox="0 0 8.4 4.2" fill="#5f6368"><path d="M0 0h8.400L4.200 4.200z"/></svg>
<svg style="left:0;top:0" width="2049" height="1582" viewBox="0 0 2049 1582"><path d="M376 800.5H720M724 800.5H754.4" stroke="#ececec" stroke-width="1"/><path d="M376 841.5H720M724 841.5H754.4" stroke="#ececec" stroke-width="1"/><path d="M376 881.5H720M724 881.5H754.4" stroke="#ececec" stroke-width="1"/><path d="M376 922.5H720M724 922.5H754.4" stroke="#ececec" stroke-width="1"/><path d="M376 962.5H720M724 962.5H754.4" stroke="#ececec" stroke-width="1"/><path d="M376 1003.5H720M724 1003.5H754.4" stroke="#ececec" stroke-width="1"/><path d="M376 1043.5H720M724 1043.5H754.4" stroke="#ececec" stroke-width="1"/><path d="M376.1 1043.5V1049" stroke="#dadce0" stroke-width="1"/><path d="M459.2 1043.5V1049" stroke="#dadce0" stroke-width="1"/><path d="M542.2 1043.5V1049" stroke="#dadce0" stroke-width="1"/><path d="M625.3 1043.5V1049" stroke="#dadce0" stroke-width="1"/><path d="M708.4 1043.5V1049" stroke="#dadce0" stroke-width="1"/><polyline points="376.1,930.4 388.0,926.3 399.8,922.5 411.7,918.7 423.5,913.8 435.4,910.8 447.2,907.8 459.1,902.6 470.9,898.7 482.8,896.8 494.7,893.0 506.5,890.0 518.4,887.8 530.2,882.6 542.1,878.5 553.9,875.8 565.8,873.6 577.6,869.5 589.5,865.7 601.3,863.8 613.2,862.7 625.1,862.7 636.9,859.7 648.8,857.5 660.6,859.9 672.5,852.8 684.3,852.8 696.2,852.0 708.0,852.0 719.9,847.1" fill="none" stroke="#245fd9" stroke-width="2" stroke-linejoin="round"/><polyline points="376.1,1004.8 388.0,1007.0 399.8,1002.9 411.7,999.9 423.5,999.9 435.4,999.9 447.2,997.7 459.1,995.8 470.9,996.9 482.8,997.9 494.7,996.9 506.5,997.9 518.4,999.9 530.2,998.8 542.1,996.9 553.9,997.9 565.8,994.7 577.6,994.7 589.5,992.8 601.3,989.7 613.2,990.8 625.1,992.8 636.9,992.8 648.8,993.8 660.6,995.8 672.5,993.8 684.3,996.9 696.2,995.8 708.0,996.9 719.9,992.8" fill="none" stroke="#639836" stroke-width="2" stroke-linejoin="round"/><polyline points="376.1,1037.6 388.0,1034.8 399.8,1035.9 411.7,1035.9 423.5,1037.0 435.4,1035.9 447.2,1035.9 459.1,1037.0 470.9,1034.8 482.8,1037.8 494.7,1034.8 506.5,1036.8 518.4,1037.8 530.2,1035.9 542.1,1033.7 553.9,1035.9 565.8,1035.9 577.6,1033.7 589.5,1034.8 601.3,1035.9 613.2,1037.0 625.1,1035.9 636.9,1035.9 648.8,1035.9 660.6,1035.9 672.5,1032.7 684.3,1038.9 696.2,1035.9 708.0,1037.0 719.9,1031.8" fill="none" stroke="#e0851f" stroke-width="2" stroke-linejoin="round"/><circle cx="719.9" cy="847.1" r="4.3" fill="#3872e0" stroke="#245fd9" stroke-width="0.8"/><rect x="715.4" y="988" width="9.6" height="9.700" fill="#72a047"/><path d="M720.3 1026.1l5.700 5.700-5.700 5.700-5.700-5.700z" fill="#dc8a2d"/></svg>
<span class="t " style="right:1293.60px;top:802.00px;font-size:12px;color:#5f6368;">1.2K</span>
<span class="t " style="right:1293.60px;top:843.00px;font-size:12px;color:#5f6368;">1K</span>
<span class="t " style="right:1293.60px;top:883.00px;font-size:12px;color:#5f6368;">800</span>
<span class="t " style="right:1293.60px;top:924.00px;font-size:12px;color:#5f6368;">600</span>
<span class="t " style="right:1293.60px;top:964.00px;font-size:12px;color:#5f6368;">400</span>
<span class="t " style="right:1293.60px;top:1005.00px;font-size:12px;color:#5f6368;">200</span>
<span class="t " style="right:1293.60px;top:1045.00px;font-size:12px;color:#5f6368;">0</span>
<span class="t " style="left:376.40px;top:1049.00px;font-size:12px;color:#5f6368;">14</span>
<span class="t " style="left:376.40px;top:1061.00px;font-size:12px;color:#5f6368;">Sep</span>
<span class="t " style="left:459.20px;transform:translateX(-50%);top:1049.00px;font-size:12px;color:#5f6368;">21</span>
<span class="t " style="left:542.20px;transform:translateX(-50%);top:1049.00px;font-size:12px;color:#5f6368;">28</span>
<span class="t " style="left:625.60px;transform:translateX(-50%);top:1049.00px;font-size:12px;color:#5f6368;">05</span>
<span class="t " style="left:625.60px;transform:translateX(-50%);top:1061.00px;font-size:12px;color:#5f6368;">Oct</span>
<span class="t " style="left:702.30px;transform:translateX(-50%);top:1049.00px;font-size:12px;color:#5f6368;">12</span>
<svg style="left:780.5px;top:800.9px" width="10.2" height="10.2" viewBox="0 0 10.2 10.2"><circle cx="5.100" cy="5.100" r="5.100" fill="#3872e0"/></svg>
<span class="t m" style="left:794.60px;top:802.00px;font-size:11px;color:#5f6368;letter-spacing:0.410px;">30 DAYS</span>
<span class="t " style="left:789.40px;top:819.00px;font-size:22px;color:#202124;letter-spacing:0.064px;">968</span>
<svg style="left:792.10px;top:846.20px" width="6.2" height="9.8" viewBox="0 0 6.2 9.8" fill="#2e7d32"><path d="M3.10 0.00L6.20 4.02L4.20 4.02L4.20 9.80L2.00 9.80L2.00 4.02L0.00 4.02z"/></svg>
<span class="t m2" style="left:801.60px;top:847.00px;font-size:11.5px;color:#2e7d32;letter-spacing:0.038px;">68.3%</span>
<div style="position:absolute;left:780.3px;top:885.1px;width:10.1px;height:10.1px;background:#72a047"></div>
<span class="t m" style="left:794.60px;top:886.00px;font-size:11px;color:#5f6368;letter-spacing:0.281px;">7 DAYS</span>
<span class="t " style="left:789.40px;top:903.00px;font-size:22px;color:#202124;letter-spacing:0.164px;">249</span>
<svg style="left:792.10px;top:930.40px" width="6.2" height="9.8" viewBox="0 0 6.2 9.8" fill="#2e7d32"><path d="M3.10 0.00L6.20 4.02L4.20 4.02L4.20 9.80L2.00 9.80L2.00 4.02L0.00 4.02z"/></svg>
<span class="t m2" style="left:801.60px;top:931.00px;font-size:11.5px;color:#2e7d32;letter-spacing:0.038px;">39.9%</span>
<svg style="left:779.1px;top:968.0px" width="12.8" height="12.8" viewBox="0 0 12.8 12.8"><path d="M6.400 0l6.400 6.400-6.400 6.400L0 6.400z" fill="#dc8a2d"/></svg>
<span class="t m" style="left:794.60px;top:970.00px;font-size:11px;color:#5f6368;letter-spacing:0.265px;">1 DAY</span>
<span class="t " style="left:789.40px;top:987.00px;font-size:22px;color:#202124;letter-spacing:0.364px;">53</span>
<svg style="left:792.10px;top:1014.60px" width="6.2" height="9.8" viewBox="0 0 6.2 9.8" fill="#2e7d32"><path d="M3.10 0.00L6.20 4.02L4.20 4.02L4.20 9.80L2.00 9.80L2.00 4.02L0.00 4.02z"/></svg>
<span class="t m2" style="left:801.60px;top:1015.00px;font-size:11.5px;color:#2e7d32;letter-spacing:0.038px;">39.5%</span>
<div class="card" style="left:906px;top:725px;width:466px;height:402px"></div>
<span class="t " style="left:931.00px;top:753.00px;font-size:14px;color:#3c4043;letter-spacing:0.399px;">New vs Returning users</span>
<div style="position:absolute;left:1287.0px;top:750.0px;width:60.0px;height:28.0px;border:1px solid #dadce0;border-radius:14px;background:#fff"></div>
<svg style="left:1294.30px;top:754.15px" width="19.3" height="19.3" viewBox="0 0 24 24" fill="#2a7138" ><path d="M16.59 7.58L10 14.17l-3.590-3.580L5 12l5 5 8-8zM12 2C6.480 2 2 6.480 2 12s4.480 10 10 10 10-4.480 10-10S17.520 2 12 2zm0 18c-4.420 0-8-3.580-8-8s3.580-8 8-8 8 3.580 8 8-3.580 8-8 8z"/></svg>
<svg style="left:1325.7px;top:762.1px" width="8.4" height="4.2" viewBox="0 0 8.4 4.2" fill="#5f6368"><path d="M0 0h8.400L4.200 4.200z"/></svg>
<svg style="left:0;top:0" width="2049" height="1582" viewBox="0 0 2049 1582"><path d="M936 800.5H1312M1316 800.5H1346.600" stroke="#ececec" stroke-width="1"/><path d="M936 871.5H1312M1316 871.5H1346.600" stroke="#ececec" stroke-width="1"/><path d="M936 942.5H1312M1316 942.5H1346.600" stroke="#ececec" stroke-width="1"/><path d="M936 1013.5H1312M1316 1013.5H1346.600" stroke="#ececec" stroke-width="1"/><path d="M936.3 1013.5V1019" stroke="#dadce0" stroke-width="1"/><path d="M1027.0 1013.5V1019" stroke="#dadce0" stroke-width="1"/><path d="M1117.7 1013.5V1019" stroke="#dadce0" stroke-width="1"/><path d="M1208.5 1013.5V1019" stroke="#dadce0" stroke-width="1"/><path d="M1299.2 1013.5V1019" stroke="#dadce0" stroke-width="1"/><polyline points="936.3,937.2 949.3,889.0 962.2,906.6 975.2,896.3 988.1,913.9 1001.1,913.9 1014.1,910.0 1027.0,910.0 1040.0,906.6 1052.9,920.9 1065.9,877.6 1078.8,923.5 1091.8,949.1 1104.8,895.7 1117.7,875.0 1130.7,898.8 1143.6,889.0 1156.6,870.9 1169.6,889.0 1182.5,891.9 1195.5,917.0 1208.4,903.0 1221.4,910.0 1234.3,896.3 1247.3,898.8 1260.3,857.4 1273.2,948.6 1286.2,891.9 1299.1,920.9 1312.1,843.1" fill="none" stroke="#245fd9" stroke-width="2" stroke-linejoin="miter"/><polyline points="936.3,1001.2 949.3,969.9 962.2,977.9 975.2,981.0 988.1,995.3 1001.1,966.8 1014.1,988.3 1027.0,1002.0 1040.0,969.9 1052.9,998.9 1065.9,995.3 1078.8,981.0 1091.8,977.9 1104.8,991.6 1117.7,991.6 1130.7,1002.0 1143.6,977.9 1156.6,991.6 1169.6,977.9 1182.5,1006.2 1195.5,991.6 1208.4,995.3 1221.4,988.3 1234.3,981.0 1247.3,998.9 1260.3,995.3 1273.2,995.3 1286.2,988.3 1299.1,995.3 1312.1,977.9" fill="none" stroke="#639836" stroke-width="2" stroke-linejoin="miter"/><circle cx="1312.1" cy="843.1" r="4.3" fill="#3872e0" stroke="#245fd9" stroke-width="0.8"/><rect x="1307.3" y="973.2" width="9.6" height="9.600" fill="#72a047"/></svg>
<span class="t " style="right:702.20px;top:802.00px;font-size:12px;color:#5f6368;">60</span>
<span class="t " style="right:702.20px;top:873.00px;font-size:12px;color:#5f6368;">40</span>
<span class="t " style="right:702.20px;top:944.00px;font-size:12px;color:#5f6368;">20</span>
<span class="t " style="right:702.20px;top:1015.00px;font-size:12px;color:#5f6368;">0</span>
<span class="t " style="left:936.60px;top:1019.00px;font-size:12px;color:#5f6368;">14</span>
<span class="t " style="left:936.60px;top:1031.00px;font-size:12px;color:#5f6368;">Sep</span>
<span class="t " style="left:1027.00px;transform:translateX(-50%);top:1019.00px;font-size:12px;color:#5f6368;">21</span>
<span class="t " style="left:1117.70px;transform:translateX(-50%);top:1019.00px;font-size:12px;color:#5f6368;">28</span>
<span class="t " style="left:1208.70px;transform:translateX(-50%);top:1019.00px;font-size:12px;color:#5f6368;">05</span>
<span class="t " style="left:1208.70px;transform:translateX(-50%);top:1031.00px;font-size:12px;color:#5f6368;">Oct</span>
<span class="t " style="left:1292.80px;transform:translateX(-50%);top:1019.00px;font-size:12px;color:#5f6368;">12</span>
<svg style="left:935.8px;top:1059.2px" width="10.2" height="10.2" viewBox="0 0 10.2 10.2"><circle cx="5.100" cy="5.100" r="5.100" fill="#3872e0"/></svg>
<span class="t " style="left:951.20px;top:1058.00px;font-size:12px;color:#3c4043;">new</span>
<div style="position:absolute;left:982.9px;top:1059.5px;width:9.8px;height:9.8px;background:#72a047"></div>
<span class="t " style="left:998.00px;top:1058.00px;font-size:12px;color:#3c4043;letter-spacing:0.004px;">returning</span>
<div class="card" style="left:346px;top:1141px;width:306px;height:402px"></div>
<span class="t " style="left:371.20px;top:1169.00px;font-size:14px;color:#202124;letter-spacing:0.379px;">Active users</span>
<svg style="left:452.9px;top:1174.2px" width="9" height="5" viewBox="0 0 9 5" fill="#808285"><path d="M0 0h8.600L4.300 4.400z"/></svg>
<span class="t " style="left:466.10px;top:1169.00px;font-size:14px;color:#202124;letter-spacing:0.407px;">by</span>
<span class="t " style="left:371.20px;top:1189.00px;font-size:14px;color:#3c4043;letter-spacing:0.641px;">Device category</span>
<i class="dsh" style="left:371.0px;top:1204.0px;width:110.0px;background-image:repeating-linear-gradient(90deg,#80868b 0 3px,transparent 3px 5px)"></i>
<div style="position:absolute;left:567.0px;top:1166.0px;width:60.0px;height:28.0px;border:1px solid #dadce0;border-radius:14px;background:#fff"></div>
<svg style="left:574.30px;top:1170.15px" width="19.3" height="19.3" viewBox="0 0 24 24" fill="#2a7138" ><path d="M16.59 7.58L10 14.17l-3.590-3.580L5 12l5 5 8-8zM12 2C6.480 2 2 6.480 2 12s4.480 10 10 10 10-4.480 10-10S17.520 2 12 2zm0 18c-4.420 0-8-3.580-8-8s3.580-8 8-8 8 3.580 8 8-3.580 8-8 8z"/></svg>
<svg style="left:605.7px;top:1178.1px" width="8.4" height="4.2" viewBox="0 0 8.4 4.2" fill="#5f6368"><path d="M0 0h8.400L4.200 4.200z"/></svg>
<svg style="left:0;top:0" width="2049" height="1582" viewBox="0 0 2049 1582"><path d="M498.90 1226.70A91.30 91.30 0 0 1 501.45 1409.26L500.74 1383.87A65.90 65.90 0 0 0 498.90 1252.10z" fill="#2f62cb"/><path d="M501.77 1409.25A91.30 91.30 0 0 1 493.80 1226.84L495.22 1252.20A65.90 65.90 0 0 0 500.97 1383.87z" fill="#5282e8"/><path d="M493.49 1226.86A91.30 91.30 0 0 1 498.90 1226.70L498.90 1252.10A65.90 65.90 0 0 0 494.99 1252.22z" fill="#8fb0f2"/></svg>
<svg style="left:380.7px;top:1437px" width="6" height="6" viewBox="0 0 6 6"><circle cx="3" cy="3" r="3" fill="#2f62cb"/></svg>
<span class="t m" style="left:392.30px;top:1434.00px;font-size:11px;color:#5f6368;letter-spacing:0.305px;">MOBILE</span>
<span class="t " style="left:392.50px;top:1451.00px;font-size:22px;color:#202124;letter-spacing:-0.676px;">49.5%</span>
<svg style="left:393.80px;top:1478.30px" width="6.2" height="9.8" viewBox="0 0 6.2 9.8" fill="#2e7d32"><path d="M3.10 0.00L6.20 4.02L4.20 4.02L4.20 9.80L2.00 9.80L2.00 4.02L0.00 4.02z"/></svg>
<span class="t m2" style="left:404.10px;top:1479.00px;font-size:11.5px;color:#2e7d32;letter-spacing:-0.002px;">44.3%</span>
<svg style="left:471.9px;top:1437px" width="6" height="6" viewBox="0 0 6 6"><circle cx="3" cy="3" r="3" fill="#5282e8"/></svg>
<span class="t m" style="left:483.50px;top:1434.00px;font-size:11px;color:#5f6368;letter-spacing:0.061px;">DESKTOP</span>
<span class="t " style="left:483.70px;top:1451.00px;font-size:22px;color:#202124;letter-spacing:-0.676px;">49.5%</span>
<svg style="left:485.00px;top:1478.30px" width="6.2" height="9.8" viewBox="0 0 6.2 9.8" fill="#2e7d32"><path d="M3.10 0.00L6.20 4.02L4.20 4.02L4.20 9.80L2.00 9.80L2.00 4.02L0.00 4.02z"/></svg>
<span class="t m2" style="left:495.30px;top:1479.00px;font-size:11.5px;color:#2e7d32;letter-spacing:0.099px;">104.7%</span>
<svg style="left:562.7px;top:1437px" width="6" height="6" viewBox="0 0 6 6"><circle cx="3" cy="3" r="3" fill="#8fb0f2"/></svg>
<span class="t m" style="left:574.30px;top:1434.00px;font-size:11px;color:#5f6368;letter-spacing:0.358px;">TABLET</span>
<span class="t " style="left:574.50px;top:1451.00px;font-size:22px;color:#202124;letter-spacing:-0.186px;">0.9%</span>
<svg style="left:575.80px;top:1478.30px" width="6.2" height="9.8" viewBox="0 0 6.2 9.8" fill="#bf3427"><path d="M3.10 9.80L0.00 5.88L2.30 5.88L2.30 0.00L3.90 0.00L3.90 5.88L6.20 5.88z"/></svg>
<span class="t m2" style="left:586.10px;top:1479.00px;font-size:11.5px;color:#bf3427;letter-spacing:-0.002px;">10.0%</span>
<svg style="left:616.70px;top:1507.40px" width="18" height="18" viewBox="0 0 24 24" fill="#2f69da" ><path d="M12 4l-1.410 1.410L16.170 11H4v2h12.170l-5.580 5.590L12 20l8-8z"/></svg>
<span class="t m" style="right:1440.52px;top:1510.00px;font-size:14px;color:#2f69da;letter-spacing:0.476px;">View device categories</span>
</div></body></html>
